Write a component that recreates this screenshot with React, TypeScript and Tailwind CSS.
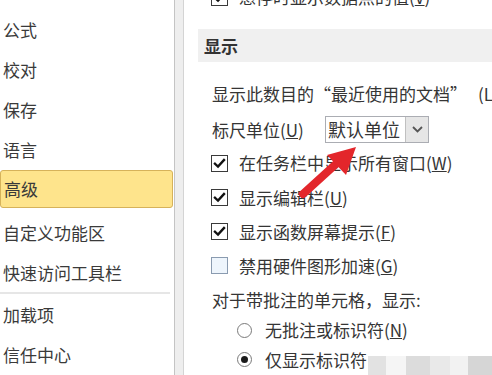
import React from "react";

const font = { fontFamily: '"Noto Sans CJK SC", "Noto Sans", sans-serif' };

function Check({ checked = true }: { checked?: boolean }) {
  if (!checked) {
    return <div className="w-[17px] h-[17px] border border-[#8a9bb0] bg-[#eef5fc] shrink-0" />;
  }
  return (
    <div className="w-[17px] h-[17px] border border-[#3a3a3a] bg-white shrink-0 flex items-center justify-center">
      <svg width="13" height="13" viewBox="0 0 13 13">
        <path d="M2 6.8 L5 9.6 L11 3" fill="none" stroke="#111" strokeWidth="2.4" strokeLinecap="square" />
      </svg>
    </div>
  );
}

function Radio({ on = false }: { on?: boolean }) {
  return (
    <div className="w-[15px] h-[15px] rounded-full border border-[#7a7a7a] bg-white shrink-0 flex items-center justify-center">
      {on && <div className="w-[7px] h-[7px] rounded-full bg-[#1a1a1a]" />}
    </div>
  );
}

const left = ["公式", "校对", "保存", "语言"];

export default function App() {
  return (
    <div className="w-[492px] h-[375px] overflow-hidden flex bg-white text-[17px] text-[#353535] relative" style={font}>
      {/* left nav */}
      <div className="w-[175px] shrink-0 border-r border-[#c4c4c4] flex flex-col pt-[10px] text-[#3a3a3a]">
        {left.map((t) => (
          <div key={t} className="h-[40px] flex items-center pl-[3px]">{t}</div>
        ))}
        <div className="h-[39px] flex items-center pl-[3px] mr-[1px] bg-[#fee48c] border border-[#d6b25a] rounded-[3px]">高级</div>
        <div className="h-[44px] flex items-center pt-[4px] pl-[3px]">自定义功能区</div>
        <div className="h-[40px] flex items-center pl-[3px]">快速访问工具栏</div>
        <div className="h-[2px] bg-[#e6e6e6] mr-[4px]" />
        <div className="h-[41px] flex items-center pl-[3px]">加载项</div>
        <div className="h-[40px] flex items-center pl-[3px]">信任中心</div>
      </div>
      {/* strip */}
      <div className="w-[9px] shrink-0 bg-[#eeeeee] border-r border-[#d4d4d4]" />
      {/* content */}
      <div className="flex-1 flex flex-col min-w-0 overflow-hidden">
        <div className="h-[30px]">
          <div className="-mt-[14px] h-[22px] flex items-center pl-[27px] gap-[11px] whitespace-nowrap">
            <Check />
            <span>悬停时显示数据点的值(<u>V</u>)</span>
          </div>
        </div>
        <div className="ml-[14px] h-[33px] bg-[#f0f0f0] flex items-center pl-[6px] font-bold text-[#333]">显示</div>
        <div className="mt-[18px] h-[28px] flex items-center pl-[28px] whitespace-nowrap">
          <span className="shrink-0">显示此数目的“最近使用的文档</span>
          <span className="inline-block w-[28px] shrink-0 text-left">”</span>
          <span className="shrink-0">(L)</span>
        </div>
        <div className="mt-[9px] h-[27px] flex items-center pl-[28px] whitespace-nowrap">
          <span className="w-[113px] shrink-0">标尺单位(<u>U</u>)</span>
          <div className="w-[104px] h-[27px] border border-[#abadb3] flex bg-white shrink-0">
            <div className="flex-1 flex items-center pl-[2px] text-[18px]">默认单位</div>
            <div className="w-[23px] bg-[#e6e6e6] border-l border-[#c0c0c0] flex items-center justify-center">
              <svg width="11" height="7" viewBox="0 0 11 7">
                <path d="M1 1 L5.5 5.5 L10 1" fill="none" stroke="#555" strokeWidth="1.8" />
              </svg>
            </div>
          </div>
        </div>
        <div className="mt-[3px] h-[35px] flex items-center pl-[27px] gap-[11px] whitespace-nowrap">
          <Check />
          <span>在任务栏中显示所有窗口(<u>W</u>)</span>
        </div>
        <div className="h-[35px] flex items-center pl-[27px] gap-[11px] whitespace-nowrap">
          <Check />
          <span>显示编辑栏(<u>U</u>)</span>
        </div>
        <div className="h-[35px] flex items-center pl-[27px] gap-[11px] whitespace-nowrap">
          <Check />
          <span>显示函数屏幕提示(<u>F</u>)</span>
        </div>
        <div className="h-[35px] flex items-center pl-[27px] gap-[11px] whitespace-nowrap">
          <Check checked={false} />
          <span>禁用硬件图形加速(<u>G</u>)</span>
        </div>
        <div className="h-[34px] flex items-center pl-[28px] whitespace-nowrap">对于带批注的单元格，显示:</div>
        <div className="h-[28px] flex items-center pl-[53px] gap-[13px] whitespace-nowrap">
          <Radio />
          <span>无批注或标识符(<u>N</u>)</span>
        </div>
        <div className="h-[32px] flex items-center pl-[53px] gap-[13px] whitespace-nowrap">
          <Radio on />
          <span>仅显示标识符</span>
        </div>
      </div>

      {/* red arrow overlay */}
      <svg className="absolute left-0 top-0 pointer-events-none z-10" width="492" height="375" viewBox="0 0 492 375">
        <line x1="303" y1="194" x2="336" y2="164" stroke="#e3262b" strokeWidth="8" strokeLinecap="round" />
        <polygon points="356,147 327,155 346,175" fill="#e3262b" />
      </svg>

      {/* blurred watermark blocks */}
      <div className="absolute left-[368px] top-[356px] w-[124px] h-[19px] flex pointer-events-none z-10">
        <div className="w-[18px] h-[19px] bg-[#e2e2e2]" />
        <div className="w-[20px] h-[19px] bg-[#f5f5f5]" />
        <div className="w-[24px] h-[19px] bg-[#dcdcdc]" />
        <div className="w-[20px] h-[19px] bg-[#e9e9e9]" />
        <div className="w-[18px] h-[19px] bg-[#f2f2f2]" />
        <div className="w-[24px] h-[19px] bg-[#d6d6d6]" />
      </div>
    </div>
  );
}
